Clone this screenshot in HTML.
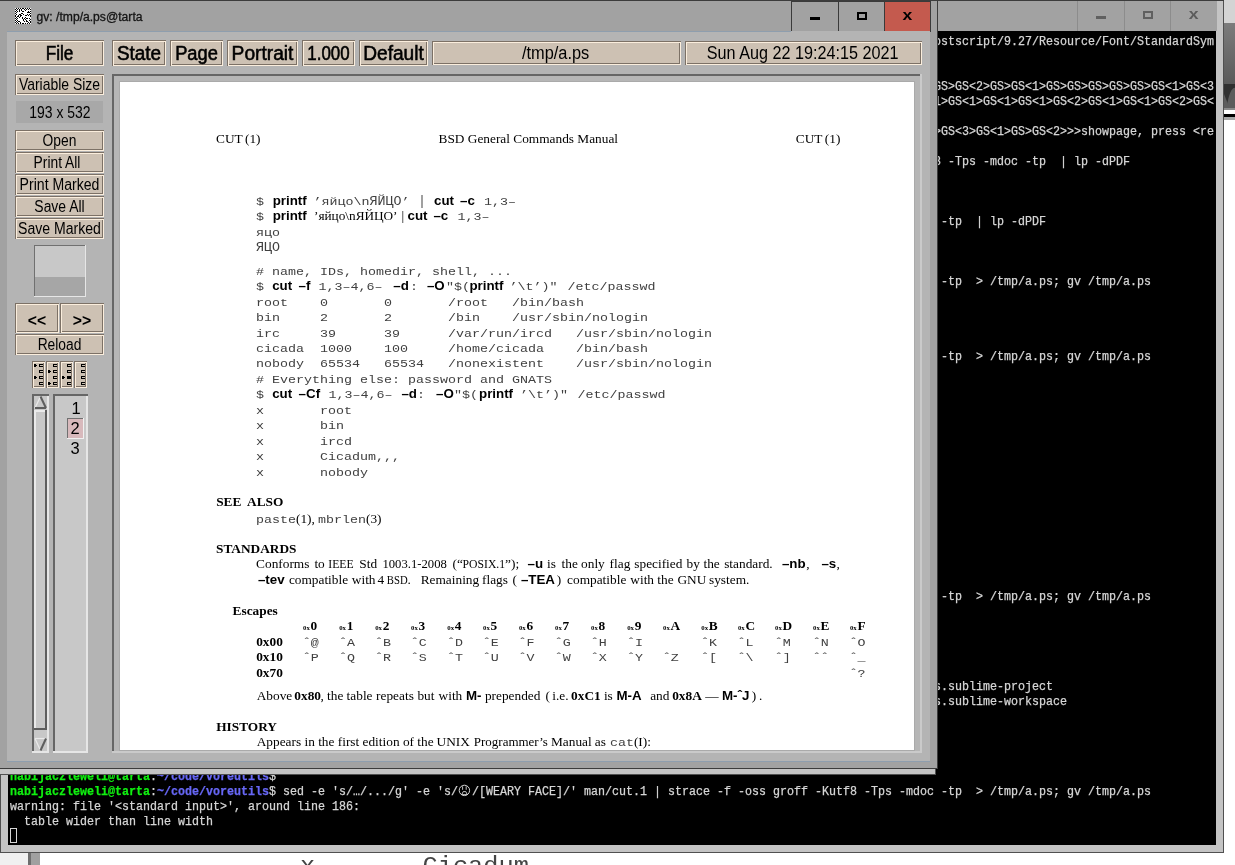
<!DOCTYPE html>
<html><head><meta charset="utf-8"><title>gv: /tmp/a.ps@tarta</title>
<style>
html,body{margin:0;padding:0;background:#fff;}
body{width:1235px;height:865px;overflow:hidden;position:relative;font-family:"Liberation Sans",sans-serif;}
svg{position:absolute;left:0;top:0;display:block;will-change:transform;}
rect{shape-rendering:crispEdges;}
text{white-space:pre;}
</style></head>
<body>
<svg width="1235" height="865" viewBox="0 0 1235 865">
<rect x="0" y="0" width="1235" height="865" fill="#ffffff"/>
<rect x="1224" y="0" width="11" height="23" fill="#d4d4d4"/>
<defs><linearGradient id="dg" x1="0" y1="0" x2="0" y2="1"><stop offset="0" stop-color="#7c7c7c"/><stop offset="1" stop-color="#5a5a5a"/></linearGradient></defs>
<rect x="1224" y="23" width="11" height="61" fill="url(#dg)"/>
<rect x="1224" y="84" width="11" height="24" fill="#303030"/>
<path d="M1226.5 108 Q1230 86 1236 88 L1236 108 Z" fill="#5c5c5c"/>
<path d="M1224 94 L1229.5 108 L1224 108 Z" fill="#5c5c5c"/>
<rect x="1224" y="108" width="11" height="2" fill="#8a8a8a"/>
<rect x="1224" y="110" width="11" height="3.5" fill="#ffffff"/>
<rect x="1224" y="113.5" width="11" height="3.5" fill="#000000"/>
<rect x="1224" y="117" width="11" height="3" fill="#a8a8a8"/>
<rect x="0" y="852" width="28" height="13" fill="#f0f0f0"/>
<rect x="28" y="852" width="3" height="13" fill="#6e6e6e"/>
<rect x="31" y="852" width="9" height="13" fill="#a0a0a0"/>
<text x="300" y="873" font-family="'Liberation Mono'" font-size="24" font-weight="normal" fill="#444" textLength="15.2" lengthAdjust="spacingAndGlyphs" xml:space="preserve">x</text>
<text x="422.5" y="873" font-family="'Liberation Mono'" font-size="24" font-weight="normal" fill="#444" textLength="106.4" lengthAdjust="spacingAndGlyphs" xml:space="preserve">Cicadum</text>
<rect x="0" y="0" width="1224" height="853" fill="#505050"/>
<rect x="1" y="1" width="1222" height="851" fill="#c4c4c4"/>
<rect x="1" y="1" width="1216" height="30" fill="#a2a2a2"/>
<rect x="0" y="0" width="1224" height="1" fill="#3c3c3c"/>
<rect x="8" y="31" width="1208" height="814" fill="#000000"/>
<rect x="1077" y="1" width="1" height="30" fill="#8c8c8c"/>
<rect x="1124" y="1" width="1" height="30" fill="#8c8c8c"/>
<rect x="1170" y="1" width="1" height="30" fill="#8c8c8c"/>
<rect x="1096" y="16" width="10" height="3" fill="#606060"/>
<rect x="1144" y="12" width="8" height="6" fill="none" stroke="#606060" stroke-width="2"/>
<text x="1188.7" y="19.0" font-family="'Liberation Sans'" font-size="14.8" font-weight="bold" fill="#5c5c5c" textLength="9.8" lengthAdjust="spacingAndGlyphs" xml:space="preserve">x</text>
<text x="934" y="45" font-family="'Liberation Mono'" font-size="12.2" font-weight="normal" fill="#d6d6d6" textLength="280" lengthAdjust="spacingAndGlyphs" stroke="#d6d6d6" stroke-width="0.25" xml:space="preserve">ostscript/9.27/Resource/Font/StandardSym</text>
<text x="934" y="90" font-family="'Liberation Mono'" font-size="12.2" font-weight="normal" fill="#d6d6d6" textLength="280" lengthAdjust="spacingAndGlyphs" stroke="#d6d6d6" stroke-width="0.25" xml:space="preserve">GS&gt;GS&lt;2&gt;GS&gt;GS&lt;1&gt;GS&gt;GS&gt;GS&gt;GS&gt;GS&gt;GS&lt;1&gt;GS&lt;3</text>
<text x="934" y="105" font-family="'Liberation Mono'" font-size="12.2" font-weight="normal" fill="#d6d6d6" textLength="280" lengthAdjust="spacingAndGlyphs" stroke="#d6d6d6" stroke-width="0.25" xml:space="preserve">1&gt;GS&lt;1&gt;GS&lt;1&gt;GS&lt;1&gt;GS&lt;2&gt;GS&lt;1&gt;GS&lt;1&gt;GS&lt;2&gt;GS&lt;</text>
<text x="934" y="135" font-family="'Liberation Mono'" font-size="12.2" font-weight="normal" fill="#d6d6d6" textLength="280" lengthAdjust="spacingAndGlyphs" stroke="#d6d6d6" stroke-width="0.25" xml:space="preserve">&gt;GS&lt;3&gt;GS&lt;1&gt;GS&gt;GS&lt;2&gt;&gt;&gt;showpage, press &lt;re</text>
<text x="934" y="165" font-family="'Liberation Mono'" font-size="12.2" font-weight="normal" fill="#d6d6d6" textLength="196" lengthAdjust="spacingAndGlyphs" stroke="#d6d6d6" stroke-width="0.25" xml:space="preserve">8 -Tps -mdoc -tp  | lp -dPDF</text>
<text x="941" y="225" font-family="'Liberation Mono'" font-size="12.2" font-weight="normal" fill="#d6d6d6" textLength="105" lengthAdjust="spacingAndGlyphs" stroke="#d6d6d6" stroke-width="0.25" xml:space="preserve">-tp  | lp -dPDF</text>
<text x="941" y="285" font-family="'Liberation Mono'" font-size="12.2" font-weight="normal" fill="#d6d6d6" textLength="210" lengthAdjust="spacingAndGlyphs" stroke="#d6d6d6" stroke-width="0.25" xml:space="preserve">-tp  &gt; /tmp/a.ps; gv /tmp/a.ps</text>
<text x="941" y="360" font-family="'Liberation Mono'" font-size="12.2" font-weight="normal" fill="#d6d6d6" textLength="210" lengthAdjust="spacingAndGlyphs" stroke="#d6d6d6" stroke-width="0.25" xml:space="preserve">-tp  &gt; /tmp/a.ps; gv /tmp/a.ps</text>
<text x="941" y="600" font-family="'Liberation Mono'" font-size="12.2" font-weight="normal" fill="#d6d6d6" textLength="210" lengthAdjust="spacingAndGlyphs" stroke="#d6d6d6" stroke-width="0.25" xml:space="preserve">-tp  &gt; /tmp/a.ps; gv /tmp/a.ps</text>
<text x="934" y="690" font-family="'Liberation Mono'" font-size="12.2" font-weight="normal" fill="#d6d6d6" textLength="119" lengthAdjust="spacingAndGlyphs" stroke="#d6d6d6" stroke-width="0.25" xml:space="preserve">s.sublime-project</text>
<text x="934" y="705" font-family="'Liberation Mono'" font-size="12.2" font-weight="normal" fill="#d6d6d6" textLength="133" lengthAdjust="spacingAndGlyphs" stroke="#d6d6d6" stroke-width="0.25" xml:space="preserve">s.sublime-workspace</text>
<text x="10" y="780" font-family="'Liberation Mono'" font-size="12.2" font-weight="bold" fill="#10f010" textLength="140" lengthAdjust="spacingAndGlyphs" stroke="#10f010" stroke-width="0.25" xml:space="preserve">nabijaczleweli@tarta</text>
<text x="150" y="780" font-family="'Liberation Mono'" font-size="12.2" font-weight="normal" fill="#d6d6d6" textLength="7" lengthAdjust="spacingAndGlyphs" stroke="#d6d6d6" stroke-width="0.25" xml:space="preserve">:</text>
<text x="157" y="780" font-family="'Liberation Mono'" font-size="12.2" font-weight="bold" fill="#6767f5" textLength="112" lengthAdjust="spacingAndGlyphs" stroke="#6767f5" stroke-width="0.25" xml:space="preserve">~/code/voreutils</text>
<text x="269" y="780" font-family="'Liberation Mono'" font-size="12.2" font-weight="normal" fill="#d6d6d6" textLength="7" lengthAdjust="spacingAndGlyphs" stroke="#d6d6d6" stroke-width="0.25" xml:space="preserve">$</text>
<text x="10" y="795" font-family="'Liberation Mono'" font-size="12.2" font-weight="bold" fill="#10f010" textLength="140" lengthAdjust="spacingAndGlyphs" stroke="#10f010" stroke-width="0.25" xml:space="preserve">nabijaczleweli@tarta</text>
<text x="150" y="795" font-family="'Liberation Mono'" font-size="12.2" font-weight="normal" fill="#d6d6d6" textLength="7" lengthAdjust="spacingAndGlyphs" stroke="#d6d6d6" stroke-width="0.25" xml:space="preserve">:</text>
<text x="157" y="795" font-family="'Liberation Mono'" font-size="12.2" font-weight="bold" fill="#6767f5" textLength="112" lengthAdjust="spacingAndGlyphs" stroke="#6767f5" stroke-width="0.25" xml:space="preserve">~/code/voreutils</text>
<text x="269" y="795" font-family="'Liberation Mono'" font-size="12.2" font-weight="normal" fill="#d6d6d6" textLength="7" lengthAdjust="spacingAndGlyphs" stroke="#d6d6d6" stroke-width="0.25" xml:space="preserve">$</text>
<text x="283" y="795" font-family="'Liberation Mono'" font-size="12.2" font-weight="normal" fill="#d6d6d6" textLength="175" lengthAdjust="spacingAndGlyphs" stroke="#d6d6d6" stroke-width="0.25" xml:space="preserve">sed -e &#x27;s/…/.../g&#x27; -e &#x27;s/</text>
<g stroke="#d6d6d6" fill="none" stroke-width="1"><circle cx="464.4" cy="790.4" r="5.2"/><path d="M462.6 786.3 V789.8 M466.2 786.3 V789.8 M463.2 791.6 H465.8 L467.2 794.6 H461.8 Z" stroke-width="0.9"/></g>
<text x="472" y="795" font-family="'Liberation Mono'" font-size="12.2" font-weight="normal" fill="#d6d6d6" textLength="679" lengthAdjust="spacingAndGlyphs" stroke="#d6d6d6" stroke-width="0.25" xml:space="preserve">/[WEARY FACE]/&#x27; man/cut.1 | strace -f -oss groff -Kutf8 -Tps -mdoc -tp  &gt; /tmp/a.ps; gv /tmp/a.ps</text>
<text x="10" y="810" font-family="'Liberation Mono'" font-size="12.2" font-weight="normal" fill="#d6d6d6" textLength="350" lengthAdjust="spacingAndGlyphs" stroke="#d6d6d6" stroke-width="0.25" xml:space="preserve">warning: file &#x27;&lt;standard input&gt;&#x27;, around line 186:</text>
<text x="24" y="825" font-family="'Liberation Mono'" font-size="12.2" font-weight="normal" fill="#d6d6d6" textLength="189" lengthAdjust="spacingAndGlyphs" stroke="#d6d6d6" stroke-width="0.25" xml:space="preserve">table wider than line width</text>
<rect x="10.5" y="828.5" width="6" height="14" fill="none" stroke="#d6d6d6" stroke-width="1"/>
<rect x="0" y="768" width="936" height="7" fill="#505050"/>
<rect x="0" y="769" width="935" height="5" fill="#c4c4c4"/>
<rect x="0" y="0" width="938" height="769" fill="#3c3c3c"/>
<rect x="0" y="1" width="937" height="767" fill="#a2a2a2"/>
<rect x="15" y="8" width="16" height="16" fill="#ffffff"/>
<rect x="16" y="8" width="1" height="1" fill="#000"/>
<rect x="18" y="8" width="1" height="1" fill="#000"/>
<rect x="20" y="8" width="1" height="1" fill="#000"/>
<rect x="22" y="8" width="1" height="1" fill="#000"/>
<rect x="23" y="8" width="1" height="1" fill="#000"/>
<rect x="25" y="8" width="1" height="1" fill="#000"/>
<rect x="27" y="8" width="1" height="1" fill="#000"/>
<rect x="29" y="8" width="1" height="1" fill="#000"/>
<rect x="15" y="9" width="1" height="1" fill="#000"/>
<rect x="17" y="9" width="1" height="1" fill="#000"/>
<rect x="19" y="9" width="1" height="1" fill="#000"/>
<rect x="21" y="9" width="1" height="1" fill="#000"/>
<rect x="24" y="9" width="1" height="1" fill="#000"/>
<rect x="26" y="9" width="1" height="1" fill="#000"/>
<rect x="28" y="9" width="1" height="1" fill="#000"/>
<rect x="30" y="9" width="1" height="1" fill="#000"/>
<rect x="16" y="10" width="1" height="1" fill="#000"/>
<rect x="19" y="10" width="1" height="1" fill="#000"/>
<rect x="21" y="10" width="1" height="1" fill="#000"/>
<rect x="25" y="10" width="1" height="1" fill="#000"/>
<rect x="15" y="11" width="1" height="1" fill="#000"/>
<rect x="17" y="11" width="1" height="1" fill="#000"/>
<rect x="19" y="11" width="1" height="1" fill="#000"/>
<rect x="22" y="11" width="1" height="1" fill="#000"/>
<rect x="23" y="11" width="1" height="1" fill="#000"/>
<rect x="28" y="11" width="1" height="1" fill="#000"/>
<rect x="30" y="11" width="1" height="1" fill="#000"/>
<rect x="16" y="12" width="1" height="1" fill="#000"/>
<rect x="27" y="12" width="1" height="1" fill="#000"/>
<rect x="28" y="12" width="1" height="1" fill="#000"/>
<rect x="29" y="12" width="1" height="1" fill="#000"/>
<rect x="15" y="13" width="1" height="1" fill="#000"/>
<rect x="21" y="13" width="1" height="1" fill="#000"/>
<rect x="22" y="13" width="1" height="1" fill="#000"/>
<rect x="30" y="13" width="1" height="1" fill="#000"/>
<rect x="16" y="14" width="1" height="1" fill="#000"/>
<rect x="19" y="14" width="1" height="1" fill="#000"/>
<rect x="20" y="14" width="1" height="1" fill="#000"/>
<rect x="23" y="14" width="1" height="1" fill="#000"/>
<rect x="27" y="14" width="1" height="1" fill="#000"/>
<rect x="29" y="14" width="1" height="1" fill="#000"/>
<rect x="15" y="15" width="1" height="1" fill="#000"/>
<rect x="18" y="15" width="1" height="1" fill="#000"/>
<rect x="20" y="15" width="1" height="1" fill="#000"/>
<rect x="21" y="15" width="1" height="1" fill="#000"/>
<rect x="25" y="15" width="1" height="1" fill="#000"/>
<rect x="26" y="15" width="1" height="1" fill="#000"/>
<rect x="28" y="15" width="1" height="1" fill="#000"/>
<rect x="30" y="15" width="1" height="1" fill="#000"/>
<rect x="15" y="16" width="1" height="1" fill="#000"/>
<rect x="17" y="16" width="1" height="1" fill="#000"/>
<rect x="18" y="16" width="1" height="1" fill="#000"/>
<rect x="20" y="16" width="1" height="1" fill="#000"/>
<rect x="30" y="16" width="1" height="1" fill="#000"/>
<rect x="16" y="17" width="1" height="1" fill="#000"/>
<rect x="19" y="17" width="1" height="1" fill="#000"/>
<rect x="22" y="17" width="1" height="1" fill="#000"/>
<rect x="25" y="17" width="1" height="1" fill="#000"/>
<rect x="15" y="18" width="1" height="1" fill="#000"/>
<rect x="17" y="18" width="1" height="1" fill="#000"/>
<rect x="22" y="18" width="1" height="1" fill="#000"/>
<rect x="24" y="18" width="1" height="1" fill="#000"/>
<rect x="26" y="18" width="1" height="1" fill="#000"/>
<rect x="27" y="18" width="1" height="1" fill="#000"/>
<rect x="29" y="18" width="1" height="1" fill="#000"/>
<rect x="16" y="19" width="1" height="1" fill="#000"/>
<rect x="23" y="19" width="1" height="1" fill="#000"/>
<rect x="25" y="19" width="1" height="1" fill="#000"/>
<rect x="30" y="19" width="1" height="1" fill="#000"/>
<rect x="15" y="20" width="1" height="1" fill="#000"/>
<rect x="17" y="20" width="1" height="1" fill="#000"/>
<rect x="23" y="20" width="1" height="1" fill="#000"/>
<rect x="26" y="20" width="1" height="1" fill="#000"/>
<rect x="29" y="20" width="1" height="1" fill="#000"/>
<rect x="16" y="21" width="1" height="1" fill="#000"/>
<rect x="18" y="21" width="1" height="1" fill="#000"/>
<rect x="19" y="21" width="1" height="1" fill="#000"/>
<rect x="24" y="21" width="1" height="1" fill="#000"/>
<rect x="26" y="21" width="1" height="1" fill="#000"/>
<rect x="27" y="21" width="1" height="1" fill="#000"/>
<rect x="30" y="21" width="1" height="1" fill="#000"/>
<rect x="15" y="22" width="1" height="1" fill="#000"/>
<rect x="17" y="22" width="1" height="1" fill="#000"/>
<rect x="20" y="22" width="1" height="1" fill="#000"/>
<rect x="28" y="22" width="1" height="1" fill="#000"/>
<rect x="30" y="22" width="1" height="1" fill="#000"/>
<rect x="16" y="23" width="1" height="1" fill="#000"/>
<rect x="18" y="23" width="1" height="1" fill="#000"/>
<rect x="20" y="23" width="1" height="1" fill="#000"/>
<rect x="22" y="23" width="1" height="1" fill="#000"/>
<rect x="23" y="23" width="1" height="1" fill="#000"/>
<rect x="25" y="23" width="1" height="1" fill="#000"/>
<rect x="27" y="23" width="1" height="1" fill="#000"/>
<rect x="29" y="23" width="1" height="1" fill="#000"/>
<text x="36.5" y="20.8" font-family="'Liberation Sans'" font-size="12" font-weight="normal" fill="#141414" textLength="106" lengthAdjust="spacingAndGlyphs" stroke="#141414" stroke-width="0.3" xml:space="preserve">gv: /tmp/a.ps@tarta</text>
<rect x="791" y="1" width="48" height="31" fill="#3a3a3a"/>
<rect x="792" y="2" width="46" height="29" fill="#a2a2a2"/>
<rect x="838" y="1" width="47" height="31" fill="#3a3a3a"/>
<rect x="839" y="2" width="45" height="29" fill="#a2a2a2"/>
<rect x="884" y="1" width="47" height="31" fill="#3a3a3a"/>
<rect x="885" y="2" width="45" height="29" fill="#c45a4e"/>
<rect x="810" y="17" width="10" height="3" fill="#000"/>
<rect x="858" y="13" width="8" height="6" fill="none" stroke="#000" stroke-width="2"/>
<text x="902.4" y="20.2" font-family="'Liberation Sans'" font-size="15.2" font-weight="bold" fill="#000" textLength="9.8" lengthAdjust="spacingAndGlyphs" xml:space="preserve">x</text>
<rect x="7" y="31" width="923" height="730" fill="#b4b4b4"/>
<rect x="7" y="31" width="784" height="1" fill="#8e9eae"/>
<rect x="7" y="761" width="923" height="1" fill="#8e9eae"/>
<rect x="15" y="40" width="89" height="26" fill="#7c7166"/>
<rect x="16" y="41" width="88" height="25" fill="#fbeedd"/>
<rect x="17" y="42" width="86" height="23" fill="#7c7166"/>
<rect x="17" y="42" width="85" height="22" fill="#cdc1b3"/>
<text x="45.65" y="60" font-family="'Liberation Sans'" font-size="19.5" font-weight="normal" fill="#000" textLength="27.7" lengthAdjust="spacingAndGlyphs" stroke="#000" stroke-width="0.55" xml:space="preserve">File</text>
<rect x="112" y="40" width="54" height="26" fill="#7c7166"/>
<rect x="113" y="41" width="53" height="25" fill="#fbeedd"/>
<rect x="114" y="42" width="51" height="23" fill="#7c7166"/>
<rect x="114" y="42" width="50" height="22" fill="#cdc1b3"/>
<text x="116.9" y="60" font-family="'Liberation Sans'" font-size="19.5" font-weight="normal" fill="#000" textLength="44.2" lengthAdjust="spacingAndGlyphs" stroke="#000" stroke-width="0.55" xml:space="preserve">State</text>
<rect x="170" y="40" width="53" height="26" fill="#7c7166"/>
<rect x="171" y="41" width="52" height="25" fill="#fbeedd"/>
<rect x="172" y="42" width="50" height="23" fill="#7c7166"/>
<rect x="172" y="42" width="49" height="22" fill="#cdc1b3"/>
<text x="175.15" y="60" font-family="'Liberation Sans'" font-size="19.5" font-weight="normal" fill="#000" textLength="42.7" lengthAdjust="spacingAndGlyphs" stroke="#000" stroke-width="0.55" xml:space="preserve">Page</text>
<rect x="227" y="40" width="71" height="26" fill="#7c7166"/>
<rect x="228" y="41" width="70" height="25" fill="#fbeedd"/>
<rect x="229" y="42" width="68" height="23" fill="#7c7166"/>
<rect x="229" y="42" width="67" height="22" fill="#cdc1b3"/>
<text x="231.6" y="60" font-family="'Liberation Sans'" font-size="19.5" font-weight="normal" fill="#000" textLength="61.8" lengthAdjust="spacingAndGlyphs" stroke="#000" stroke-width="0.55" xml:space="preserve">Portrait</text>
<rect x="302" y="40" width="53" height="26" fill="#7c7166"/>
<rect x="303" y="41" width="52" height="25" fill="#fbeedd"/>
<rect x="304" y="42" width="50" height="23" fill="#7c7166"/>
<rect x="304" y="42" width="49" height="22" fill="#cdc1b3"/>
<text x="307.3" y="60" font-family="'Liberation Sans'" font-size="19.5" font-weight="normal" fill="#000" textLength="42.4" lengthAdjust="spacingAndGlyphs" stroke="#000" stroke-width="0.55" xml:space="preserve">1.000</text>
<rect x="359" y="40" width="69" height="26" fill="#7c7166"/>
<rect x="360" y="41" width="68" height="25" fill="#fbeedd"/>
<rect x="361" y="42" width="66" height="23" fill="#7c7166"/>
<rect x="361" y="42" width="65" height="22" fill="#cdc1b3"/>
<text x="363.2" y="60" font-family="'Liberation Sans'" font-size="19.5" font-weight="normal" fill="#000" textLength="60.6" lengthAdjust="spacingAndGlyphs" stroke="#000" stroke-width="0.55" xml:space="preserve">Default</text>
<rect x="432" y="41" width="249" height="24" fill="#7c7166"/>
<rect x="433" y="42" width="248" height="23" fill="#fbeedd"/>
<rect x="434" y="43" width="246" height="21" fill="#7c7166"/>
<rect x="434" y="43" width="245" height="20" fill="#cdc1b3"/>
<text x="522" y="59.3" font-family="'Liberation Sans'" font-size="17.5" font-weight="normal" fill="#000" textLength="67.3" lengthAdjust="spacingAndGlyphs" xml:space="preserve">/tmp/a.ps</text>
<rect x="685" y="41" width="237" height="24" fill="#7c7166"/>
<rect x="686" y="42" width="236" height="23" fill="#fbeedd"/>
<rect x="687" y="43" width="234" height="21" fill="#7c7166"/>
<rect x="687" y="43" width="233" height="20" fill="#cdc1b3"/>
<text x="706.8" y="59" font-family="'Liberation Sans'" font-size="17.5" font-weight="normal" fill="#000" textLength="191.7" lengthAdjust="spacingAndGlyphs" xml:space="preserve">Sun Aug 22 19:24:15 2021</text>
<rect x="15" y="74" width="89" height="21" fill="#7c7166"/>
<rect x="16" y="75" width="88" height="20" fill="#fbeedd"/>
<rect x="17" y="76" width="86" height="18" fill="#7c7166"/>
<rect x="17" y="76" width="85" height="17" fill="#cdc1b3"/>
<text x="18.9" y="90" font-family="'Liberation Sans'" font-size="16.2" font-weight="normal" fill="#000" textLength="81.2" lengthAdjust="spacingAndGlyphs" xml:space="preserve">Variable Size</text>
<rect x="16" y="101" width="87" height="22" fill="#a8a8a8"/>
<text x="29.3" y="118" font-family="'Liberation Sans'" font-size="15.8" font-weight="normal" fill="#000" textLength="61.2" lengthAdjust="spacingAndGlyphs" xml:space="preserve">193 x 532</text>
<rect x="15" y="130" width="89" height="21" fill="#7c7166"/>
<rect x="16" y="131" width="88" height="20" fill="#fbeedd"/>
<rect x="17" y="132" width="86" height="18" fill="#7c7166"/>
<rect x="17" y="132" width="85" height="17" fill="#cdc1b3"/>
<text x="42.6" y="145.5" font-family="'Liberation Sans'" font-size="16" font-weight="normal" fill="#000" textLength="33.8" lengthAdjust="spacingAndGlyphs" xml:space="preserve">Open</text>
<rect x="15" y="152" width="89" height="21" fill="#7c7166"/>
<rect x="16" y="153" width="88" height="20" fill="#fbeedd"/>
<rect x="17" y="154" width="86" height="18" fill="#7c7166"/>
<rect x="17" y="154" width="85" height="17" fill="#cdc1b3"/>
<text x="33.6" y="167.5" font-family="'Liberation Sans'" font-size="16" font-weight="normal" fill="#000" textLength="46.8" lengthAdjust="spacingAndGlyphs" xml:space="preserve">Print All</text>
<rect x="15" y="174" width="89" height="21" fill="#7c7166"/>
<rect x="16" y="175" width="88" height="20" fill="#fbeedd"/>
<rect x="17" y="176" width="86" height="18" fill="#7c7166"/>
<rect x="17" y="176" width="85" height="17" fill="#cdc1b3"/>
<text x="19.6" y="189.5" font-family="'Liberation Sans'" font-size="16" font-weight="normal" fill="#000" textLength="79.8" lengthAdjust="spacingAndGlyphs" xml:space="preserve">Print Marked</text>
<rect x="15" y="196" width="89" height="21" fill="#7c7166"/>
<rect x="16" y="197" width="88" height="20" fill="#fbeedd"/>
<rect x="17" y="198" width="86" height="18" fill="#7c7166"/>
<rect x="17" y="198" width="85" height="17" fill="#cdc1b3"/>
<text x="34.35" y="211.5" font-family="'Liberation Sans'" font-size="16" font-weight="normal" fill="#000" textLength="50.3" lengthAdjust="spacingAndGlyphs" xml:space="preserve">Save All</text>
<rect x="15" y="218" width="89" height="21" fill="#7c7166"/>
<rect x="16" y="219" width="88" height="20" fill="#fbeedd"/>
<rect x="17" y="220" width="86" height="18" fill="#7c7166"/>
<rect x="17" y="220" width="85" height="17" fill="#cdc1b3"/>
<text x="18.049999999999997" y="233.5" font-family="'Liberation Sans'" font-size="16" font-weight="normal" fill="#000" textLength="82.9" lengthAdjust="spacingAndGlyphs" xml:space="preserve">Save Marked</text>
<rect x="34" y="245" width="52" height="52" fill="#e6e6e6"/>
<rect x="34" y="245" width="51" height="51" fill="#707070"/>
<rect x="35" y="246" width="50" height="31" fill="#c8c8c8"/>
<rect x="35" y="277" width="50" height="19" fill="#a6a6a6"/>
<rect x="15" y="303" width="44" height="30" fill="#7c7166"/>
<rect x="16" y="304" width="43" height="29" fill="#fbeedd"/>
<rect x="17" y="305" width="41" height="27" fill="#7c7166"/>
<rect x="17" y="305" width="40" height="26" fill="#cdc1b3"/>
<text x="27.85" y="325.5" font-family="'Liberation Sans'" font-size="16" font-weight="bold" fill="#000" textLength="18.3" lengthAdjust="spacingAndGlyphs" xml:space="preserve">&lt;&lt;</text>
<rect x="60" y="303" width="44" height="30" fill="#7c7166"/>
<rect x="61" y="304" width="43" height="29" fill="#fbeedd"/>
<rect x="62" y="305" width="41" height="27" fill="#7c7166"/>
<rect x="62" y="305" width="40" height="26" fill="#cdc1b3"/>
<text x="72.8" y="325.5" font-family="'Liberation Sans'" font-size="16" font-weight="bold" fill="#000" textLength="18.4" lengthAdjust="spacingAndGlyphs" xml:space="preserve">&gt;&gt;</text>
<rect x="15" y="334" width="89" height="21" fill="#7c7166"/>
<rect x="16" y="335" width="88" height="20" fill="#fbeedd"/>
<rect x="17" y="336" width="86" height="18" fill="#7c7166"/>
<rect x="17" y="336" width="85" height="17" fill="#cdc1b3"/>
<text x="37.65" y="349.6" font-family="'Liberation Sans'" font-size="16" font-weight="normal" fill="#000" textLength="43.7" lengthAdjust="spacingAndGlyphs" xml:space="preserve">Reload</text>
<rect x="32" y="361" width="13" height="27" fill="#7c7166"/>
<rect x="33" y="362" width="12" height="26" fill="#fbeedd"/>
<rect x="34" y="363" width="10" height="24" fill="#7c7166"/>
<rect x="34" y="363" width="9" height="23" fill="#cdc1b3"/>
<rect x="39" y="364" width="4" height="3" fill="#000"/>
<rect x="40" y="365" width="3" height="1" fill="#cdc1b3"/>
<rect x="34" y="364" width="2" height="3" fill="#000"/>
<rect x="36" y="365" width="1" height="1" fill="#000"/>
<rect x="39" y="370" width="4" height="3" fill="#000"/>
<rect x="40" y="371" width="3" height="1" fill="#cdc1b3"/>
<rect x="39" y="376" width="4" height="3" fill="#000"/>
<rect x="40" y="377" width="3" height="1" fill="#cdc1b3"/>
<rect x="34" y="376" width="2" height="3" fill="#000"/>
<rect x="36" y="377" width="1" height="1" fill="#000"/>
<rect x="39" y="382" width="4" height="3" fill="#000"/>
<rect x="40" y="383" width="3" height="1" fill="#cdc1b3"/>
<rect x="46" y="361" width="13" height="27" fill="#7c7166"/>
<rect x="47" y="362" width="12" height="26" fill="#fbeedd"/>
<rect x="48" y="363" width="10" height="24" fill="#7c7166"/>
<rect x="48" y="363" width="9" height="23" fill="#cdc1b3"/>
<rect x="53" y="364" width="4" height="3" fill="#000"/>
<rect x="54" y="365" width="3" height="1" fill="#cdc1b3"/>
<rect x="53" y="370" width="4" height="3" fill="#000"/>
<rect x="54" y="371" width="3" height="1" fill="#cdc1b3"/>
<rect x="48" y="370" width="2" height="3" fill="#000"/>
<rect x="50" y="371" width="1" height="1" fill="#000"/>
<rect x="53" y="376" width="4" height="3" fill="#000"/>
<rect x="54" y="377" width="3" height="1" fill="#cdc1b3"/>
<rect x="53" y="382" width="4" height="3" fill="#000"/>
<rect x="54" y="383" width="3" height="1" fill="#cdc1b3"/>
<rect x="48" y="382" width="2" height="3" fill="#000"/>
<rect x="50" y="383" width="1" height="1" fill="#000"/>
<rect x="60" y="361" width="13" height="27" fill="#7c7166"/>
<rect x="61" y="362" width="12" height="26" fill="#fbeedd"/>
<rect x="62" y="363" width="10" height="24" fill="#7c7166"/>
<rect x="62" y="363" width="9" height="23" fill="#cdc1b3"/>
<rect x="67" y="364" width="4" height="3" fill="#000"/>
<rect x="68" y="365" width="3" height="1" fill="#cdc1b3"/>
<rect x="67" y="370" width="4" height="3" fill="#000"/>
<rect x="68" y="371" width="3" height="1" fill="#cdc1b3"/>
<rect x="67" y="376" width="4" height="3" fill="#000"/>
<rect x="62" y="376" width="2" height="3" fill="#000"/>
<rect x="64" y="377" width="1" height="1" fill="#000"/>
<rect x="67" y="382" width="4" height="3" fill="#000"/>
<rect x="68" y="383" width="3" height="1" fill="#cdc1b3"/>
<rect x="74" y="361" width="13" height="27" fill="#7c7166"/>
<rect x="75" y="362" width="12" height="26" fill="#fbeedd"/>
<rect x="76" y="363" width="10" height="24" fill="#7c7166"/>
<rect x="76" y="363" width="9" height="23" fill="#cdc1b3"/>
<rect x="81" y="364" width="4" height="3" fill="#000"/>
<rect x="82" y="365" width="3" height="1" fill="#cdc1b3"/>
<rect x="81" y="370" width="4" height="3" fill="#000"/>
<rect x="82" y="371" width="3" height="1" fill="#cdc1b3"/>
<rect x="81" y="376" width="4" height="3" fill="#000"/>
<rect x="82" y="377" width="3" height="1" fill="#cdc1b3"/>
<rect x="81" y="382" width="4" height="3" fill="#000"/>
<rect x="82" y="383" width="3" height="1" fill="#cdc1b3"/>
<rect x="32" y="394" width="17" height="359" fill="#e6e6e6"/>
<rect x="32" y="394" width="15" height="357" fill="#666666"/>
<rect x="47" y="394" width="2" height="2" fill="#666666"/>
<rect x="34" y="396" width="13" height="355" fill="#c8c8c8"/>
<path d="M35 408 L40.5 396.5" stroke="#eaeaea" stroke-width="1.2" fill="none"/>
<path d="M40.5 396.5 L46 408" stroke="#5e5e5e" stroke-width="2" fill="none"/>
<rect x="35" y="407" width="11" height="2" fill="#5e5e5e"/>
<rect x="34" y="410" width="13" height="320" fill="#5e5e5e"/>
<rect x="34" y="410" width="11" height="318" fill="#eaeaea"/>
<rect x="36" y="412" width="9" height="316" fill="#c8c8c8"/>
<path d="M35 738.5 L46 738.5" stroke="#eaeaea" stroke-width="1.2" fill="none"/>
<path d="M35 738.5 L40.5 750.5" stroke="#eaeaea" stroke-width="1.2" fill="none"/>
<path d="M46 738.5 L40.5 750.5" stroke="#5e5e5e" stroke-width="2" fill="none"/>
<rect x="53" y="394" width="35" height="359" fill="#e6e6e6"/>
<rect x="53" y="394" width="33" height="357" fill="#666666"/>
<rect x="86" y="394" width="2" height="2" fill="#666666"/>
<rect x="55" y="396" width="31" height="355" fill="#c8c8c8"/>
<text x="71.5" y="414" font-family="'Liberation Sans'" font-size="16.5" font-weight="normal" fill="#000" xml:space="preserve">1</text>
<rect x="67" y="418" width="17" height="21" fill="#f0f0f0"/>
<rect x="67" y="418" width="16" height="20" fill="#707070"/>
<rect x="68" y="419" width="15" height="19" fill="#d8b9bc"/>
<text x="70.5" y="434.2" font-family="'Liberation Sans'" font-size="16.5" font-weight="normal" fill="#000" xml:space="preserve">2</text>
<text x="70.5" y="453.8" font-family="'Liberation Sans'" font-size="16.5" font-weight="normal" fill="#000" xml:space="preserve">3</text>
<rect x="112" y="74" width="810" height="679" fill="#cacaca"/>
<rect x="112" y="74" width="808" height="677" fill="#666666"/>
<rect x="114" y="76" width="806" height="675" fill="#b6b6b6"/>
<rect x="119" y="81" width="796" height="670" fill="#aaaaaa"/>
<rect x="120" y="82" width="794" height="668" fill="#ffffff"/>
<text x="216" y="143.3" font-family="'Liberation Serif'" font-size="13.33" font-weight="normal" fill="#000" xml:space="preserve">CUT</text>
<text x="245" y="143.3" font-family="'Liberation Serif'" font-size="13.33" font-weight="normal" fill="#000" xml:space="preserve">(1)</text>
<text x="438.5" y="143.3" font-family="'Liberation Serif'" font-size="13.33" font-weight="normal" fill="#000" xml:space="preserve">BSD General Commands Manual</text>
<text x="795.8" y="143.3" font-family="'Liberation Serif'" font-size="13.33" font-weight="normal" fill="#000" xml:space="preserve">CUT</text>
<text x="824.8" y="143.3" font-family="'Liberation Serif'" font-size="13.33" font-weight="normal" fill="#000" xml:space="preserve">(1)</text>
<text x="256" y="204.9" font-family="'Liberation Mono'" font-size="11.8" font-weight="normal" fill="#404040" textLength="8" lengthAdjust="spacingAndGlyphs" xml:space="preserve">$</text>
<text x="272.7" y="204.9" font-family="'Liberation Sans'" font-size="13.33" font-weight="bold" fill="#000" xml:space="preserve">printf</text>
<text x="313.5" y="204.9" font-family="'Liberation Mono'" font-size="11.8" font-weight="normal" fill="#404040" textLength="56" lengthAdjust="spacingAndGlyphs" xml:space="preserve">’яйцо\n</text>
<text x="369.5" y="204.9" font-family="'Liberation Mono'" font-size="12.8" font-weight="normal" fill="#404040" textLength="32" lengthAdjust="spacingAndGlyphs" xml:space="preserve">ЯЙЦО</text>
<text x="401.5" y="204.9" font-family="'Liberation Mono'" font-size="11.8" font-weight="normal" fill="#404040" textLength="8" lengthAdjust="spacingAndGlyphs" xml:space="preserve">’</text>
<rect x="421.4" y="195.2" width="1.3" height="12.4" fill="#a0a0a0"/>
<text x="434" y="204.9" font-family="'Liberation Sans'" font-size="13.33" font-weight="bold" fill="#000" xml:space="preserve">cut</text>
<text x="460" y="204.9" font-family="'Liberation Sans'" font-size="13.33" font-weight="bold" fill="#000" xml:space="preserve">–c</text>
<text x="484" y="204.9" font-family="'Liberation Mono'" font-size="11.8" font-weight="normal" fill="#404040" textLength="32" lengthAdjust="spacingAndGlyphs" xml:space="preserve">1,3–</text>
<text x="256" y="220.3" font-family="'Liberation Mono'" font-size="11.8" font-weight="normal" fill="#404040" textLength="8" lengthAdjust="spacingAndGlyphs" xml:space="preserve">$</text>
<text x="272.7" y="220.3" font-family="'Liberation Sans'" font-size="13.33" font-weight="bold" fill="#000" xml:space="preserve">printf</text>
<text x="314" y="220.3" font-family="'Liberation Serif'" font-size="13.33" font-weight="normal" fill="#000" textLength="83.5" lengthAdjust="spacingAndGlyphs" xml:space="preserve">’яйцо\nЯЙЦО’</text>
<text x="401.5" y="220.3" font-family="'Liberation Serif'" font-size="13.33" font-weight="normal" fill="#000" xml:space="preserve">|</text>
<text x="407.5" y="220.3" font-family="'Liberation Sans'" font-size="13.33" font-weight="bold" fill="#000" xml:space="preserve">cut</text>
<text x="433.4" y="220.3" font-family="'Liberation Sans'" font-size="13.33" font-weight="bold" fill="#000" xml:space="preserve">–c</text>
<text x="457.6" y="220.3" font-family="'Liberation Mono'" font-size="11.8" font-weight="normal" fill="#404040" textLength="32" lengthAdjust="spacingAndGlyphs" xml:space="preserve">1,3–</text>
<text x="256" y="235.7" font-family="'Liberation Mono'" font-size="11.8" font-weight="normal" fill="#404040" textLength="24" lengthAdjust="spacingAndGlyphs" xml:space="preserve">яцо</text>
<text x="256" y="251.0" font-family="'Liberation Mono'" font-size="12.8" font-weight="normal" fill="#404040" textLength="24" lengthAdjust="spacingAndGlyphs" xml:space="preserve">ЯЦО</text>
<text x="256" y="274.6" font-family="'Liberation Mono'" font-size="11.8" font-weight="normal" fill="#404040" textLength="256" lengthAdjust="spacingAndGlyphs" xml:space="preserve"># name, IDs, homedir, shell, ...</text>
<text x="256" y="290.08000000000004" font-family="'Liberation Mono'" font-size="11.8" font-weight="normal" fill="#404040" textLength="8" lengthAdjust="spacingAndGlyphs" xml:space="preserve">$</text>
<text x="272.2" y="290.08000000000004" font-family="'Liberation Sans'" font-size="13.33" font-weight="bold" fill="#000" xml:space="preserve">cut</text>
<text x="298.6" y="290.08000000000004" font-family="'Liberation Sans'" font-size="13.33" font-weight="bold" fill="#000" xml:space="preserve">–f</text>
<text x="318.5" y="290.08000000000004" font-family="'Liberation Mono'" font-size="11.8" font-weight="normal" fill="#404040" textLength="64" lengthAdjust="spacingAndGlyphs" xml:space="preserve">1,3–4,6–</text>
<text x="393.3" y="290.08000000000004" font-family="'Liberation Sans'" font-size="13.33" font-weight="bold" fill="#000" xml:space="preserve">–d</text>
<text x="410" y="290.08000000000004" font-family="'Liberation Mono'" font-size="11.8" font-weight="normal" fill="#404040" textLength="8" lengthAdjust="spacingAndGlyphs" xml:space="preserve">:</text>
<text x="426.9" y="290.08000000000004" font-family="'Liberation Sans'" font-size="13.33" font-weight="bold" fill="#000" xml:space="preserve">–O</text>
<text x="446" y="290.08000000000004" font-family="'Liberation Mono'" font-size="11.8" font-weight="normal" fill="#404040" textLength="24" lengthAdjust="spacingAndGlyphs" xml:space="preserve">&quot;$(</text>
<text x="469.4" y="290.08000000000004" font-family="'Liberation Sans'" font-size="13.33" font-weight="bold" fill="#000" xml:space="preserve">printf</text>
<text x="509.5" y="290.08000000000004" font-family="'Liberation Mono'" font-size="11.8" font-weight="normal" fill="#404040" textLength="48" lengthAdjust="spacingAndGlyphs" xml:space="preserve">’\t’)&quot;</text>
<text x="567.5" y="290.08000000000004" font-family="'Liberation Mono'" font-size="11.8" font-weight="normal" fill="#404040" textLength="88" lengthAdjust="spacingAndGlyphs" xml:space="preserve">/etc/passwd</text>
<text x="256" y="305.56" font-family="'Liberation Mono'" font-size="11.8" font-weight="normal" fill="#404040" textLength="328" lengthAdjust="spacingAndGlyphs" xml:space="preserve">root    0       0       /root   /bin/bash</text>
<text x="256" y="321.04" font-family="'Liberation Mono'" font-size="11.8" font-weight="normal" fill="#404040" textLength="392" lengthAdjust="spacingAndGlyphs" xml:space="preserve">bin     2       2       /bin    /usr/sbin/nologin</text>
<text x="256" y="336.52000000000004" font-family="'Liberation Mono'" font-size="11.8" font-weight="normal" fill="#404040" textLength="456" lengthAdjust="spacingAndGlyphs" xml:space="preserve">irc     39      39      /var/run/ircd   /usr/sbin/nologin</text>
<text x="256" y="352.0" font-family="'Liberation Mono'" font-size="11.8" font-weight="normal" fill="#404040" textLength="392" lengthAdjust="spacingAndGlyphs" xml:space="preserve">cicada  1000    100     /home/cicada    /bin/bash</text>
<text x="256" y="367.48" font-family="'Liberation Mono'" font-size="11.8" font-weight="normal" fill="#404040" textLength="456" lengthAdjust="spacingAndGlyphs" xml:space="preserve">nobody  65534   65534   /nonexistent    /usr/sbin/nologin</text>
<text x="256" y="382.96000000000004" font-family="'Liberation Mono'" font-size="11.8" font-weight="normal" fill="#404040" textLength="296" lengthAdjust="spacingAndGlyphs" xml:space="preserve"># Everything else: password and GNATS</text>
<text x="256" y="398.44000000000005" font-family="'Liberation Mono'" font-size="11.8" font-weight="normal" fill="#404040" textLength="8" lengthAdjust="spacingAndGlyphs" xml:space="preserve">$</text>
<text x="272.2" y="398.44000000000005" font-family="'Liberation Sans'" font-size="13.33" font-weight="bold" fill="#000" xml:space="preserve">cut</text>
<text x="298.6" y="398.44000000000005" font-family="'Liberation Sans'" font-size="13.33" font-weight="bold" fill="#000" xml:space="preserve">–Cf</text>
<text x="328.4" y="398.44000000000005" font-family="'Liberation Mono'" font-size="11.8" font-weight="normal" fill="#404040" textLength="64" lengthAdjust="spacingAndGlyphs" xml:space="preserve">1,3–4,6–</text>
<text x="401.4" y="398.44000000000005" font-family="'Liberation Sans'" font-size="13.33" font-weight="bold" fill="#000" xml:space="preserve">–d</text>
<text x="417" y="398.44000000000005" font-family="'Liberation Mono'" font-size="11.8" font-weight="normal" fill="#404040" textLength="8" lengthAdjust="spacingAndGlyphs" xml:space="preserve">:</text>
<text x="436" y="398.44000000000005" font-family="'Liberation Sans'" font-size="13.33" font-weight="bold" fill="#000" xml:space="preserve">–O</text>
<text x="454" y="398.44000000000005" font-family="'Liberation Mono'" font-size="11.8" font-weight="normal" fill="#404040" textLength="24" lengthAdjust="spacingAndGlyphs" xml:space="preserve">&quot;$(</text>
<text x="479" y="398.44000000000005" font-family="'Liberation Sans'" font-size="13.33" font-weight="bold" fill="#000" xml:space="preserve">printf</text>
<text x="520" y="398.44000000000005" font-family="'Liberation Mono'" font-size="11.8" font-weight="normal" fill="#404040" textLength="48" lengthAdjust="spacingAndGlyphs" xml:space="preserve">’\t’)&quot;</text>
<text x="577.5" y="398.44000000000005" font-family="'Liberation Mono'" font-size="11.8" font-weight="normal" fill="#404040" textLength="88" lengthAdjust="spacingAndGlyphs" xml:space="preserve">/etc/passwd</text>
<text x="256" y="413.92" font-family="'Liberation Mono'" font-size="11.8" font-weight="normal" fill="#404040" textLength="96" lengthAdjust="spacingAndGlyphs" xml:space="preserve">x       root</text>
<text x="256" y="429.40000000000003" font-family="'Liberation Mono'" font-size="11.8" font-weight="normal" fill="#404040" textLength="88" lengthAdjust="spacingAndGlyphs" xml:space="preserve">x       bin</text>
<text x="256" y="444.88" font-family="'Liberation Mono'" font-size="11.8" font-weight="normal" fill="#404040" textLength="96" lengthAdjust="spacingAndGlyphs" xml:space="preserve">x       ircd</text>
<text x="256" y="460.36" font-family="'Liberation Mono'" font-size="11.8" font-weight="normal" fill="#404040" textLength="144" lengthAdjust="spacingAndGlyphs" xml:space="preserve">x       Cicadum,,,</text>
<text x="256" y="475.84000000000003" font-family="'Liberation Mono'" font-size="11.8" font-weight="normal" fill="#404040" textLength="112" lengthAdjust="spacingAndGlyphs" xml:space="preserve">x       nobody</text>
<text x="216.2" y="505.9" font-family="'Liberation Serif'" font-size="13.33" font-weight="bold" fill="#000" xml:space="preserve">SEE</text>
<text x="247" y="505.9" font-family="'Liberation Serif'" font-size="13.33" font-weight="bold" fill="#000" xml:space="preserve">ALSO</text>
<text x="256" y="522.9" font-family="'Liberation Mono'" font-size="11.8" font-weight="normal" fill="#404040" textLength="40" lengthAdjust="spacingAndGlyphs" xml:space="preserve">paste</text>
<text x="296" y="522.9" font-family="'Liberation Serif'" font-size="13.33" font-weight="normal" fill="#000" xml:space="preserve">(1),</text>
<text x="318" y="522.9" font-family="'Liberation Mono'" font-size="11.8" font-weight="normal" fill="#404040" textLength="48" lengthAdjust="spacingAndGlyphs" xml:space="preserve">mbrlen</text>
<text x="366" y="522.9" font-family="'Liberation Serif'" font-size="13.33" font-weight="normal" fill="#000" xml:space="preserve">(3)</text>
<text x="216" y="553.1" font-family="'Liberation Serif'" font-size="13.33" font-weight="bold" fill="#000" xml:space="preserve">STANDARDS</text>
<text x="256.1" y="568" font-family="'Liberation Serif'" font-size="13.33" font-weight="normal" fill="#000" xml:space="preserve">Conforms</text>
<text x="314.4" y="568" font-family="'Liberation Serif'" font-size="13.33" font-weight="normal" fill="#000" xml:space="preserve">to</text>
<text x="328.3" y="568" font-family="'Liberation Serif'" font-size="12" font-weight="normal" fill="#000" textLength="25.4" lengthAdjust="spacingAndGlyphs" xml:space="preserve">IEEE</text>
<text x="359.3" y="568" font-family="'Liberation Serif'" font-size="13.33" font-weight="normal" fill="#000" xml:space="preserve">Std</text>
<text x="382.4" y="568" font-family="'Liberation Serif'" font-size="13.33" font-weight="normal" fill="#000" textLength="64.5" lengthAdjust="spacingAndGlyphs" xml:space="preserve">1003.1-2008</text>
<text x="452.6" y="568" font-family="'Liberation Serif'" font-size="13.33" font-weight="normal" fill="#000" xml:space="preserve">(“</text>
<text x="462.6" y="568" font-family="'Liberation Serif'" font-size="12" font-weight="normal" fill="#000" textLength="42.5" lengthAdjust="spacingAndGlyphs" xml:space="preserve">POSIX.1</text>
<text x="505.1" y="568" font-family="'Liberation Serif'" font-size="13.33" font-weight="normal" fill="#000" xml:space="preserve">”);</text>
<text x="527.6" y="568" font-family="'Liberation Sans'" font-size="13.33" font-weight="bold" fill="#000" xml:space="preserve">–u</text>
<text x="547" y="568" font-family="'Liberation Serif'" font-size="13.33" font-weight="normal" fill="#000" xml:space="preserve">is</text>
<text x="561.6" y="568" font-family="'Liberation Serif'" font-size="13.33" font-weight="normal" fill="#000" xml:space="preserve">the</text>
<text x="581.1" y="568" font-family="'Liberation Serif'" font-size="13.33" font-weight="normal" fill="#000" xml:space="preserve">only</text>
<text x="609.6" y="568" font-family="'Liberation Serif'" font-size="13.33" font-weight="normal" fill="#000" xml:space="preserve">flag</text>
<text x="634.3" y="568" font-family="'Liberation Serif'" font-size="13.33" font-weight="normal" fill="#000" xml:space="preserve">specified</text>
<text x="686.5" y="568" font-family="'Liberation Serif'" font-size="13.33" font-weight="normal" fill="#000" xml:space="preserve">by</text>
<text x="703.5" y="568" font-family="'Liberation Serif'" font-size="13.33" font-weight="normal" fill="#000" xml:space="preserve">the</text>
<text x="724.2" y="568" font-family="'Liberation Serif'" font-size="13.33" font-weight="normal" fill="#000" xml:space="preserve">standard.</text>
<text x="781.9" y="568" font-family="'Liberation Sans'" font-size="13.33" font-weight="bold" fill="#000" xml:space="preserve">–nb</text>
<text x="806.2" y="568" font-family="'Liberation Serif'" font-size="13.33" font-weight="normal" fill="#000" xml:space="preserve">,</text>
<text x="821.4" y="568" font-family="'Liberation Sans'" font-size="13.33" font-weight="bold" fill="#000" xml:space="preserve">–s</text>
<text x="836.6" y="568" font-family="'Liberation Serif'" font-size="13.33" font-weight="normal" fill="#000" xml:space="preserve">,</text>
<text x="257.9" y="583.7" font-family="'Liberation Sans'" font-size="13.33" font-weight="bold" fill="#000" xml:space="preserve">–tev</text>
<text x="288.9" y="583.7" font-family="'Liberation Serif'" font-size="13.33" font-weight="normal" fill="#000" xml:space="preserve">compatible</text>
<text x="351.8" y="583.7" font-family="'Liberation Serif'" font-size="13.33" font-weight="normal" fill="#000" xml:space="preserve">with</text>
<text x="377.5" y="583.7" font-family="'Liberation Serif'" font-size="13.33" font-weight="normal" fill="#000" xml:space="preserve">4</text>
<text x="386.8" y="583.7" font-family="'Liberation Serif'" font-size="12" font-weight="normal" fill="#000" textLength="20.8" lengthAdjust="spacingAndGlyphs" xml:space="preserve">BSD</text>
<text x="407.5" y="583.7" font-family="'Liberation Serif'" font-size="13.33" font-weight="normal" fill="#000" xml:space="preserve">.</text>
<text x="420.7" y="583.7" font-family="'Liberation Serif'" font-size="13.33" font-weight="normal" fill="#000" xml:space="preserve">Remaining</text>
<text x="482" y="583.7" font-family="'Liberation Serif'" font-size="13.33" font-weight="normal" fill="#000" xml:space="preserve">flags</text>
<text x="512.6" y="583.7" font-family="'Liberation Serif'" font-size="13.33" font-weight="normal" fill="#000" xml:space="preserve">(</text>
<text x="520.9" y="583.7" font-family="'Liberation Sans'" font-size="13.33" font-weight="bold" fill="#000" xml:space="preserve">–TEA</text>
<text x="556.8" y="583.7" font-family="'Liberation Serif'" font-size="13.33" font-weight="normal" fill="#000" xml:space="preserve">)</text>
<text x="567.1" y="583.7" font-family="'Liberation Serif'" font-size="13.33" font-weight="normal" fill="#000" xml:space="preserve">compatible</text>
<text x="630.3" y="583.7" font-family="'Liberation Serif'" font-size="13.33" font-weight="normal" fill="#000" xml:space="preserve">with</text>
<text x="657.3" y="583.7" font-family="'Liberation Serif'" font-size="13.33" font-weight="normal" fill="#000" xml:space="preserve">the</text>
<text x="677.4" y="583.7" font-family="'Liberation Serif'" font-size="13.33" font-weight="normal" fill="#000" xml:space="preserve">GNU</text>
<text x="709" y="583.7" font-family="'Liberation Serif'" font-size="13.33" font-weight="normal" fill="#000" xml:space="preserve">system.</text>
<text x="232.6" y="614.6" font-family="'Liberation Serif'" font-size="13.33" font-weight="bold" fill="#000" xml:space="preserve">Escapes</text>
<text x="303.1" y="629.9" font-family="'Liberation Serif'" font-size="6.8" font-weight="bold" fill="#000" xml:space="preserve">0x</text>
<text x="310.6" y="629.9" font-family="'Liberation Serif'" font-size="13.33" font-weight="bold" fill="#000" xml:space="preserve">0</text>
<text x="339.2" y="629.9" font-family="'Liberation Serif'" font-size="6.8" font-weight="bold" fill="#000" xml:space="preserve">0x</text>
<text x="346.7" y="629.9" font-family="'Liberation Serif'" font-size="13.33" font-weight="bold" fill="#000" xml:space="preserve">1</text>
<text x="375.2" y="629.9" font-family="'Liberation Serif'" font-size="6.8" font-weight="bold" fill="#000" xml:space="preserve">0x</text>
<text x="382.7" y="629.9" font-family="'Liberation Serif'" font-size="13.33" font-weight="bold" fill="#000" xml:space="preserve">2</text>
<text x="411.0" y="629.9" font-family="'Liberation Serif'" font-size="6.8" font-weight="bold" fill="#000" xml:space="preserve">0x</text>
<text x="418.5" y="629.9" font-family="'Liberation Serif'" font-size="13.33" font-weight="bold" fill="#000" xml:space="preserve">3</text>
<text x="447.3" y="629.9" font-family="'Liberation Serif'" font-size="6.8" font-weight="bold" fill="#000" xml:space="preserve">0x</text>
<text x="454.8" y="629.9" font-family="'Liberation Serif'" font-size="13.33" font-weight="bold" fill="#000" xml:space="preserve">4</text>
<text x="483.1" y="629.9" font-family="'Liberation Serif'" font-size="6.8" font-weight="bold" fill="#000" xml:space="preserve">0x</text>
<text x="490.6" y="629.9" font-family="'Liberation Serif'" font-size="13.33" font-weight="bold" fill="#000" xml:space="preserve">5</text>
<text x="518.9" y="629.9" font-family="'Liberation Serif'" font-size="6.8" font-weight="bold" fill="#000" xml:space="preserve">0x</text>
<text x="526.4" y="629.9" font-family="'Liberation Serif'" font-size="13.33" font-weight="bold" fill="#000" xml:space="preserve">6</text>
<text x="555.0" y="629.9" font-family="'Liberation Serif'" font-size="6.8" font-weight="bold" fill="#000" xml:space="preserve">0x</text>
<text x="562.5" y="629.9" font-family="'Liberation Serif'" font-size="13.33" font-weight="bold" fill="#000" xml:space="preserve">7</text>
<text x="591.0999999999999" y="629.9" font-family="'Liberation Serif'" font-size="6.8" font-weight="bold" fill="#000" xml:space="preserve">0x</text>
<text x="598.5999999999999" y="629.9" font-family="'Liberation Serif'" font-size="13.33" font-weight="bold" fill="#000" xml:space="preserve">8</text>
<text x="627.1999999999999" y="629.9" font-family="'Liberation Serif'" font-size="6.8" font-weight="bold" fill="#000" xml:space="preserve">0x</text>
<text x="634.6999999999999" y="629.9" font-family="'Liberation Serif'" font-size="13.33" font-weight="bold" fill="#000" xml:space="preserve">9</text>
<text x="663.0" y="629.9" font-family="'Liberation Serif'" font-size="6.8" font-weight="bold" fill="#000" xml:space="preserve">0x</text>
<text x="670.5" y="629.9" font-family="'Liberation Serif'" font-size="13.33" font-weight="bold" fill="#000" xml:space="preserve">A</text>
<text x="701.3" y="629.9" font-family="'Liberation Serif'" font-size="6.8" font-weight="bold" fill="#000" xml:space="preserve">0x</text>
<text x="708.8" y="629.9" font-family="'Liberation Serif'" font-size="13.33" font-weight="bold" fill="#000" xml:space="preserve">B</text>
<text x="737.9" y="629.9" font-family="'Liberation Serif'" font-size="6.8" font-weight="bold" fill="#000" xml:space="preserve">0x</text>
<text x="745.4" y="629.9" font-family="'Liberation Serif'" font-size="13.33" font-weight="bold" fill="#000" xml:space="preserve">C</text>
<text x="775.0999999999999" y="629.9" font-family="'Liberation Serif'" font-size="6.8" font-weight="bold" fill="#000" xml:space="preserve">0x</text>
<text x="782.5999999999999" y="629.9" font-family="'Liberation Serif'" font-size="13.33" font-weight="bold" fill="#000" xml:space="preserve">D</text>
<text x="813.0999999999999" y="629.9" font-family="'Liberation Serif'" font-size="6.8" font-weight="bold" fill="#000" xml:space="preserve">0x</text>
<text x="820.5999999999999" y="629.9" font-family="'Liberation Serif'" font-size="13.33" font-weight="bold" fill="#000" xml:space="preserve">E</text>
<text x="849.9" y="629.9" font-family="'Liberation Serif'" font-size="6.8" font-weight="bold" fill="#000" xml:space="preserve">0x</text>
<text x="857.4" y="629.9" font-family="'Liberation Serif'" font-size="13.33" font-weight="bold" fill="#000" xml:space="preserve">F</text>
<text x="256.2" y="646" font-family="'Liberation Serif'" font-size="13.33" font-weight="bold" fill="#000" xml:space="preserve">0x00</text>
<text x="256.2" y="660.7" font-family="'Liberation Serif'" font-size="13.33" font-weight="bold" fill="#000" xml:space="preserve">0x10</text>
<text x="256.2" y="676.8" font-family="'Liberation Serif'" font-size="13.33" font-weight="bold" fill="#000" xml:space="preserve">0x70</text>
<text x="302.8" y="646" font-family="'Liberation Mono'" font-size="11.8" font-weight="normal" fill="#404040" textLength="16" lengthAdjust="spacingAndGlyphs" xml:space="preserve">ˆ@</text>
<text x="302.8" y="660.7" font-family="'Liberation Mono'" font-size="11.8" font-weight="normal" fill="#404040" textLength="16" lengthAdjust="spacingAndGlyphs" xml:space="preserve">ˆP</text>
<text x="338.9" y="646" font-family="'Liberation Mono'" font-size="11.8" font-weight="normal" fill="#404040" textLength="16" lengthAdjust="spacingAndGlyphs" xml:space="preserve">ˆA</text>
<text x="338.9" y="660.7" font-family="'Liberation Mono'" font-size="11.8" font-weight="normal" fill="#404040" textLength="16" lengthAdjust="spacingAndGlyphs" xml:space="preserve">ˆQ</text>
<text x="374.9" y="646" font-family="'Liberation Mono'" font-size="11.8" font-weight="normal" fill="#404040" textLength="16" lengthAdjust="spacingAndGlyphs" xml:space="preserve">ˆB</text>
<text x="374.9" y="660.7" font-family="'Liberation Mono'" font-size="11.8" font-weight="normal" fill="#404040" textLength="16" lengthAdjust="spacingAndGlyphs" xml:space="preserve">ˆR</text>
<text x="410.7" y="646" font-family="'Liberation Mono'" font-size="11.8" font-weight="normal" fill="#404040" textLength="16" lengthAdjust="spacingAndGlyphs" xml:space="preserve">ˆC</text>
<text x="410.7" y="660.7" font-family="'Liberation Mono'" font-size="11.8" font-weight="normal" fill="#404040" textLength="16" lengthAdjust="spacingAndGlyphs" xml:space="preserve">ˆS</text>
<text x="447" y="646" font-family="'Liberation Mono'" font-size="11.8" font-weight="normal" fill="#404040" textLength="16" lengthAdjust="spacingAndGlyphs" xml:space="preserve">ˆD</text>
<text x="447" y="660.7" font-family="'Liberation Mono'" font-size="11.8" font-weight="normal" fill="#404040" textLength="16" lengthAdjust="spacingAndGlyphs" xml:space="preserve">ˆT</text>
<text x="482.8" y="646" font-family="'Liberation Mono'" font-size="11.8" font-weight="normal" fill="#404040" textLength="16" lengthAdjust="spacingAndGlyphs" xml:space="preserve">ˆE</text>
<text x="482.8" y="660.7" font-family="'Liberation Mono'" font-size="11.8" font-weight="normal" fill="#404040" textLength="16" lengthAdjust="spacingAndGlyphs" xml:space="preserve">ˆU</text>
<text x="518.6" y="646" font-family="'Liberation Mono'" font-size="11.8" font-weight="normal" fill="#404040" textLength="16" lengthAdjust="spacingAndGlyphs" xml:space="preserve">ˆF</text>
<text x="518.6" y="660.7" font-family="'Liberation Mono'" font-size="11.8" font-weight="normal" fill="#404040" textLength="16" lengthAdjust="spacingAndGlyphs" xml:space="preserve">ˆV</text>
<text x="554.7" y="646" font-family="'Liberation Mono'" font-size="11.8" font-weight="normal" fill="#404040" textLength="16" lengthAdjust="spacingAndGlyphs" xml:space="preserve">ˆG</text>
<text x="554.7" y="660.7" font-family="'Liberation Mono'" font-size="11.8" font-weight="normal" fill="#404040" textLength="16" lengthAdjust="spacingAndGlyphs" xml:space="preserve">ˆW</text>
<text x="590.8" y="646" font-family="'Liberation Mono'" font-size="11.8" font-weight="normal" fill="#404040" textLength="16" lengthAdjust="spacingAndGlyphs" xml:space="preserve">ˆH</text>
<text x="590.8" y="660.7" font-family="'Liberation Mono'" font-size="11.8" font-weight="normal" fill="#404040" textLength="16" lengthAdjust="spacingAndGlyphs" xml:space="preserve">ˆX</text>
<text x="626.9" y="646" font-family="'Liberation Mono'" font-size="11.8" font-weight="normal" fill="#404040" textLength="16" lengthAdjust="spacingAndGlyphs" xml:space="preserve">ˆI</text>
<text x="626.9" y="660.7" font-family="'Liberation Mono'" font-size="11.8" font-weight="normal" fill="#404040" textLength="16" lengthAdjust="spacingAndGlyphs" xml:space="preserve">ˆY</text>
<text x="662.7" y="660.7" font-family="'Liberation Mono'" font-size="11.8" font-weight="normal" fill="#404040" textLength="16" lengthAdjust="spacingAndGlyphs" xml:space="preserve">ˆZ</text>
<text x="701" y="646" font-family="'Liberation Mono'" font-size="11.8" font-weight="normal" fill="#404040" textLength="16" lengthAdjust="spacingAndGlyphs" xml:space="preserve">ˆK</text>
<text x="701" y="660.7" font-family="'Liberation Mono'" font-size="11.8" font-weight="normal" fill="#404040" textLength="16" lengthAdjust="spacingAndGlyphs" xml:space="preserve">ˆ[</text>
<text x="737.6" y="646" font-family="'Liberation Mono'" font-size="11.8" font-weight="normal" fill="#404040" textLength="16" lengthAdjust="spacingAndGlyphs" xml:space="preserve">ˆL</text>
<text x="737.6" y="660.7" font-family="'Liberation Mono'" font-size="11.8" font-weight="normal" fill="#404040" textLength="16" lengthAdjust="spacingAndGlyphs" xml:space="preserve">ˆ\</text>
<text x="774.8" y="646" font-family="'Liberation Mono'" font-size="11.8" font-weight="normal" fill="#404040" textLength="16" lengthAdjust="spacingAndGlyphs" xml:space="preserve">ˆM</text>
<text x="774.8" y="660.7" font-family="'Liberation Mono'" font-size="11.8" font-weight="normal" fill="#404040" textLength="16" lengthAdjust="spacingAndGlyphs" xml:space="preserve">ˆ]</text>
<text x="812.8" y="646" font-family="'Liberation Mono'" font-size="11.8" font-weight="normal" fill="#404040" textLength="16" lengthAdjust="spacingAndGlyphs" xml:space="preserve">ˆN</text>
<text x="812.8" y="660.7" font-family="'Liberation Mono'" font-size="11.8" font-weight="normal" fill="#404040" textLength="16" lengthAdjust="spacingAndGlyphs" xml:space="preserve">ˆˆ</text>
<text x="849.6" y="646" font-family="'Liberation Mono'" font-size="11.8" font-weight="normal" fill="#404040" textLength="16" lengthAdjust="spacingAndGlyphs" xml:space="preserve">ˆO</text>
<text x="849.6" y="660.7" font-family="'Liberation Mono'" font-size="11.8" font-weight="normal" fill="#404040" textLength="16" lengthAdjust="spacingAndGlyphs" xml:space="preserve">ˆ_</text>
<text x="849.6" y="676.8" font-family="'Liberation Mono'" font-size="11.8" font-weight="normal" fill="#404040" textLength="16" lengthAdjust="spacingAndGlyphs" xml:space="preserve">ˆ?</text>
<text x="256.7" y="699.6" font-family="'Liberation Serif'" font-size="13.33" font-weight="normal" fill="#000" xml:space="preserve">Above</text>
<text x="294.3" y="699.6" font-family="'Liberation Serif'" font-size="13.33" font-weight="bold" fill="#000" xml:space="preserve">0x80</text>
<text x="320.6" y="699.6" font-family="'Liberation Serif'" font-size="13.33" font-weight="normal" fill="#000" xml:space="preserve">,</text>
<text x="327.1" y="699.6" font-family="'Liberation Serif'" font-size="13.33" font-weight="normal" fill="#000" xml:space="preserve">the</text>
<text x="346.6" y="699.6" font-family="'Liberation Serif'" font-size="13.33" font-weight="normal" fill="#000" xml:space="preserve">table</text>
<text x="376.1" y="699.6" font-family="'Liberation Serif'" font-size="13.33" font-weight="normal" fill="#000" xml:space="preserve">repeats</text>
<text x="417.4" y="699.6" font-family="'Liberation Serif'" font-size="13.33" font-weight="normal" fill="#000" xml:space="preserve">but</text>
<text x="438.6" y="699.6" font-family="'Liberation Serif'" font-size="13.33" font-weight="normal" fill="#000" xml:space="preserve">with</text>
<text x="466" y="699.6" font-family="'Liberation Sans'" font-size="13.33" font-weight="bold" fill="#000" xml:space="preserve">M-</text>
<text x="484.9" y="699.6" font-family="'Liberation Serif'" font-size="13.33" font-weight="normal" fill="#000" xml:space="preserve">prepended</text>
<text x="545.6" y="699.6" font-family="'Liberation Serif'" font-size="13.33" font-weight="normal" fill="#000" xml:space="preserve">(</text>
<text x="552.3" y="699.6" font-family="'Liberation Serif'" font-size="13.33" font-weight="normal" fill="#000" xml:space="preserve">i.e.</text>
<text x="571.1" y="699.6" font-family="'Liberation Serif'" font-size="13.33" font-weight="bold" fill="#000" xml:space="preserve">0xC1</text>
<text x="603.9" y="699.6" font-family="'Liberation Serif'" font-size="13.33" font-weight="normal" fill="#000" xml:space="preserve">is</text>
<text x="616.5" y="699.6" font-family="'Liberation Sans'" font-size="13.33" font-weight="bold" fill="#000" xml:space="preserve">M-A</text>
<text x="650.2" y="699.6" font-family="'Liberation Serif'" font-size="13.33" font-weight="normal" fill="#000" xml:space="preserve">and</text>
<text x="672.2" y="699.6" font-family="'Liberation Serif'" font-size="13.33" font-weight="bold" fill="#000" xml:space="preserve">0x8A</text>
<text x="705.2" y="699.6" font-family="'Liberation Serif'" font-size="13.33" font-weight="normal" fill="#000" xml:space="preserve">—</text>
<text x="722" y="699.6" font-family="'Liberation Sans'" font-size="13.33" font-weight="bold" fill="#000" xml:space="preserve">M-ˆJ</text>
<text x="751.8" y="699.6" font-family="'Liberation Serif'" font-size="13.33" font-weight="normal" fill="#000" xml:space="preserve">)</text>
<text x="759" y="699.6" font-family="'Liberation Serif'" font-size="13.33" font-weight="normal" fill="#000" xml:space="preserve">.</text>
<text x="216.2" y="730.7" font-family="'Liberation Serif'" font-size="13.33" font-weight="bold" fill="#000" xml:space="preserve">HISTORY</text>
<text x="256.7" y="745.9" font-family="'Liberation Serif'" font-size="13.33" font-weight="normal" fill="#000" xml:space="preserve">Appears in the first edition of the</text>
<text x="436.5" y="745.9" font-family="'Liberation Serif'" font-size="13.33" font-weight="normal" fill="#000" xml:space="preserve">UNIX</text>
<text x="473.8" y="745.9" font-family="'Liberation Serif'" font-size="13.33" font-weight="normal" fill="#000" textLength="74" lengthAdjust="spacingAndGlyphs" xml:space="preserve">Programmer’s</text>
<text x="551" y="745.9" font-family="'Liberation Serif'" font-size="13.33" font-weight="normal" fill="#000" xml:space="preserve">Manual</text>
<text x="594.8" y="745.9" font-family="'Liberation Serif'" font-size="13.33" font-weight="normal" fill="#000" xml:space="preserve">as</text>
<text x="610" y="745.9" font-family="'Liberation Mono'" font-size="11.8" font-weight="normal" fill="#404040" textLength="24" lengthAdjust="spacingAndGlyphs" xml:space="preserve">cat</text>
<text x="633.9" y="745.9" font-family="'Liberation Serif'" font-size="13.33" font-weight="normal" fill="#000" xml:space="preserve">(I):</text>
</svg>
</body></html>
